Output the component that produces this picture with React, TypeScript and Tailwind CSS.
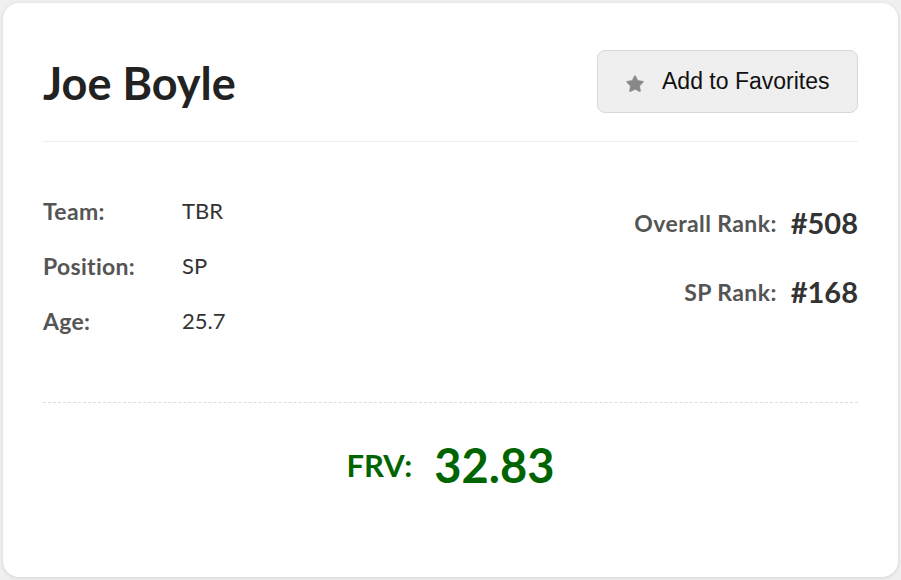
import { Star } from 'lucide-react'

const font = { fontFamily: 'Lato, "Open Sans", sans-serif' }

const info = [
    { label: 'Team:', value: 'TBR' },
    { label: 'Position:', value: 'SP' },
    { label: 'Age:', value: '25.7' },
]

const ranks = [
    { label: 'Overall Rank:', value: '#508' },
    { label: 'SP Rank:', value: '#168' },
]

const App = () => {
    return (
        <div className="min-h-screen bg-[#f0f0f0] p-[3px]">
            <div
                className="h-[574px] rounded-2xl bg-white px-10 pt-[47px] shadow-[0_1px_4px_rgba(0,0,0,0.12)]"
                style={font}
            >
                <div className="flex items-center justify-between border-b border-[#eeeeee] pb-[28px]">
                    <h1 className="text-[45px] font-bold leading-none text-[#222] mt-[3px]">Joe Boyle</h1>
                    <button
                        className="flex h-[63px] w-[261px] items-center gap-[17px] rounded-lg border border-[#d8d8d8] bg-[#efefef] pl-[27px] text-[23px] text-[#111]"
                        style={{ fontFamily: '"Liberation Sans", Arial, sans-serif' }}
                    >
                        <Star className="mt-[4px] h-[20px] w-[20px] fill-[#888] text-[#888]" strokeWidth={1} />
                        Add to Favorites
                    </button>
                </div>

                <div className="flex justify-between border-b border-dashed border-[#dddddd] pt-[56px] pb-[68px]">
                    <div className="flex flex-col gap-[29px]">
                        {info.map((row) => (
                            <div key={row.label} className="flex items-center leading-[26px]">
                                <span className="w-[139px] text-[23px] font-bold tracking-[0.3px] text-[#555]">{row.label}</span>
                                <span className="text-[22px] text-[#333]">{row.value}</span>
                            </div>
                        ))}
                    </div>
                    <div className="flex flex-col items-end gap-[33px] pt-[7px]">
                        {ranks.map((row) => (
                            <div key={row.label} className="flex items-center gap-[14px]">
                                <span className="text-[23px] font-bold tracking-[0.4px] text-[#555]">{row.label}</span>
                                <span className="text-[29px] font-bold leading-[36px] text-[#333]">{row.value}</span>
                            </div>
                        ))}
                    </div>
                </div>

                <div className="flex items-center justify-center gap-[22px] pt-[34px] text-[#006400]">
                    <span className="text-[31px] font-bold">FRV:</span>
                    <span className="text-[47px] font-bold leading-[56px]">32.83</span>
                </div>
            </div>
        </div>
    )
}

export default App
